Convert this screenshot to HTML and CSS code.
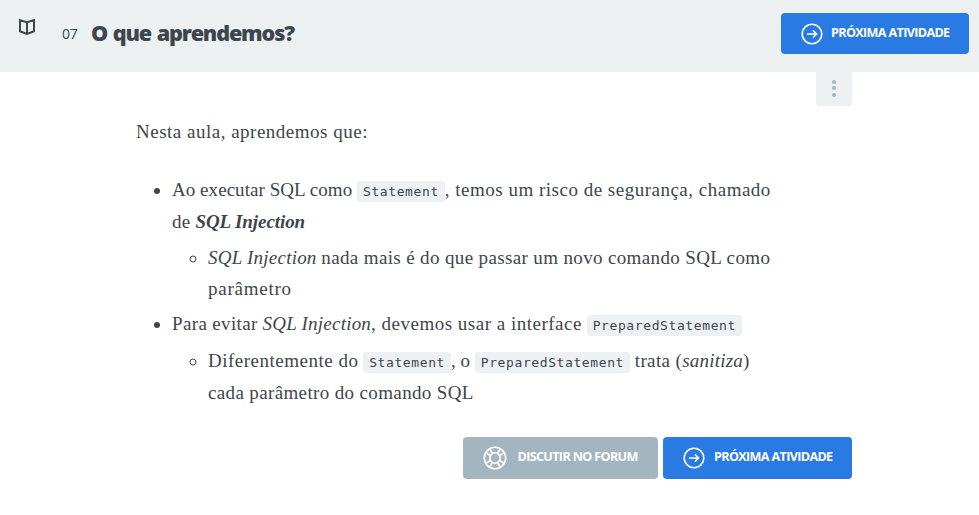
FILE: index.html
```html
<!DOCTYPE html>
<html lang="pt-BR">
<head>
<meta charset="utf-8">
<title>O que aprendemos?</title>
<link rel="stylesheet" href="styles.css">
</head>
<body>
<header class="header">
  <svg class="book" width="18" height="18" viewBox="0 0 18 18"><path d="M2 2.2 9 4.3 16 2.2V13.3L9 15.9 2 13.3ZM9 4.3V15.5"/></svg>
  <h1 class="title"><span class="number">07</span><span class="name">O que aprendemos?</span></h1>
  <a class="button button-top"><svg class="icon" width="22" height="22" viewBox="0 0 22 22"><circle cx="11" cy="11" r="9.8"/><path d="M6 11h9.5M12 7.5l3.5 3.5-3.5 3.5"/></svg><span>PRÓXIMA ATIVIDADE</span></a>
</header>
<main class="content">
  <div class="options"><i></i><i></i><i></i></div>
  <article class="text">
    <p class="spaced">Nesta aula, aprendemos que:</p>
    <ul>
      <li><span class="snug">Ao executar SQL como</span> <code>Statement</code><span class="spaced">, temos um risco de segurança, chamado</span><br><span class="medium">de</span> <strong><em>SQL Injection</em></strong>
        <ul>
          <li><em>SQL Injection</em> <span class="medium">nada mais é do que passar um novo comando SQL como</span><br><span class="wide">parâmetro</span></li>
        </ul>
      </li>
      <li><span class="medium">Para evitar</span> <em>SQL Injection</em><span class="spaced">, devemos usar a interface</span> <code>PreparedStatement</code>
        <ul class="last">
          <li><span class="spaced">Diferentemente do</span> <code>Statement</code>, o <code>PreparedStatement</code> <span class="medium">trata (</span><em>sanitiza</em>)<br><span class="medium">cada parâmetro do comando SQL</span></li>
        </ul>
      </li>
    </ul>
  </article>
  <div class="actions">
    <a class="button button-forum"><svg class="icon" width="24" height="24" viewBox="0 0 24 24"><circle cx="12" cy="12" r="10.7"/><circle cx="12" cy="12" r="5.2"/><path d="M9.5 7.2 6.6 3M7.2 9.5 3 6.6M14.5 7.2 17.4 3M16.8 9.5 21 6.6M9.5 16.8 6.6 21M7.2 14.5 3 17.4M14.5 16.8l2.9 4.2M16.8 14.5l4.2 2.9"/></svg><span>DISCUTIR NO FORUM</span></a>
    <a class="button button-next"><svg class="icon" width="22" height="22" viewBox="0 0 22 22"><circle cx="11" cy="11" r="9.8"/><path d="M6 11h9.5M12 7.5l3.5 3.5-3.5 3.5"/></svg><span>PRÓXIMA ATIVIDADE</span></a>
  </div>
</main>
</body>
</html>
```
FILE: styles.css
```css
* { box-sizing: border-box; }
body { margin: 0; background: #fff; color: #3d464d; font-family: "Open Sans", sans-serif; }
.header { display: flex; align-items: flex-start; height: 72px; padding: 13px 10px 0 18px; background: #ecf0f1; }
.book { margin-top: 5px; fill: none; stroke: #3d464d; stroke-width: 2; }
.title { display: flex; align-items: center; flex: 1; margin: 5px 0 0 26px; font-size: 22px; line-height: 32px; }
.number { width: 29px; font-size: 14px; font-weight: 400; letter-spacing: -0.2px; }
.name { position: relative; top: -1px; font-size: 21.6px; font-weight: 800; letter-spacing: -1.15px; word-spacing: 1.2px; white-space: nowrap; }
.button { display: flex; align-items: center; height: 42px; padding-left: 20px; border-radius: 4px; background: #2a7ae4; color: #fff; font-size: 12.6px; font-weight: 700; letter-spacing: -0.65px; white-space: nowrap; }
.button span { position: relative; top: -1px; }
.actions .button span { top: -2px; }
.icon { flex: none; margin-right: 9px; fill: none; stroke: #fff; stroke-width: 1.6; }
.button-top { width: 188px; height: 41px; }
.button-top .icon { margin-right: 8px; }
.button-next { width: 189px; }
.button-forum { width: 195px; background: #a3b6bf; }
.button-forum .icon { margin: 0 11px 0 -0.5px; }
.content { width: 716px; margin-left: 136px; }
.options { display: flex; flex-direction: column; align-items: center; justify-content: center; gap: 2.5px; width: 36px; height: 34px; margin-left: auto; padding-bottom: 2px; border-radius: 0 0 4px 4px; background: #ecf0f1; }
.options i { width: 4px; height: 4px; border-radius: 50%; background: #a3b6bf; }
.text { height: 331px; padding-top: 10px; font: 19px/32px "Liberation Serif", serif; white-space: nowrap; }
.text p { margin: 0 0 26px; }
.text ul { margin: 0; padding-left: 36px; }
.text ul ul { margin: 4px 0; line-height: 31px; }
.text ul .last { margin-top: 5px; line-height: 32px; }
.text em { letter-spacing: 0.22px; }
.text strong em { letter-spacing: -0.08px; }
.snug { letter-spacing: 0.05px; }
.medium { letter-spacing: 0.36px; }
.spaced { letter-spacing: 0.5px; }
.wide { letter-spacing: 0.75px; }
code { padding: 3px 6px; border-radius: 3px; background: #eef1f4; font: 13px/20px "DejaVu Sans Mono", monospace; letter-spacing: 0.6px; }
.actions { display: flex; justify-content: flex-end; gap: 5px; }
```
